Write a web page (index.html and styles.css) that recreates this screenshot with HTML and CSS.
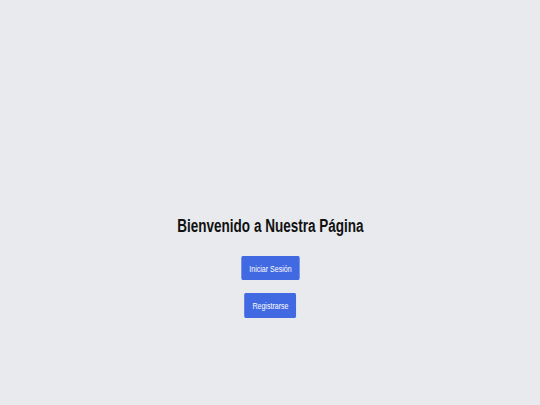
FILE: index.html
```html
<!DOCTYPE html>
<html lang="es">
<head>
<meta charset="utf-8">
<title>Bienvenido</title>
<link rel="stylesheet" href="styles.css">
</head>
<body>
<main class="page">
  <div class="stage">
    <h1 class="title">Bienvenido a Nuestra Página</h1>
    <button class="btn">Iniciar Sesión</button>
    <button class="btn">Registrarse</button>
  </div>
</main>
</body>
</html>
```

FILE: styles.css
```css
html, body {
  margin: 0;
  padding: 0;
  height: 100%;
}
body {
  background: #e8eaed;
  font-family: "Liberation Sans", Arial, sans-serif;
}
.page {
  display: flex;
  justify-content: center;
  padding-top: 214px;
}
.stage {
  display: flex;
  flex-direction: column;
  align-items: center;
  transform: scaleX(0.72);
  transform-origin: center top;
}
.title {
  margin: 0;
  font-size: 18.8px;
  line-height: 24px;
  font-weight: bold;
  color: #111;
  white-space: nowrap;
}
.btn {
  margin-top: 18px;
  height: 24px;
  padding: 0 11px;
  border: none;
  border-radius: 2px;
  background: #4169e1;
  color: #fff;
  font-family: "Liberation Sans", Arial, sans-serif;
  font-size: 9.8px;
}
.btn + .btn {
  margin-top: 13px;
  height: 25px;
}
```
